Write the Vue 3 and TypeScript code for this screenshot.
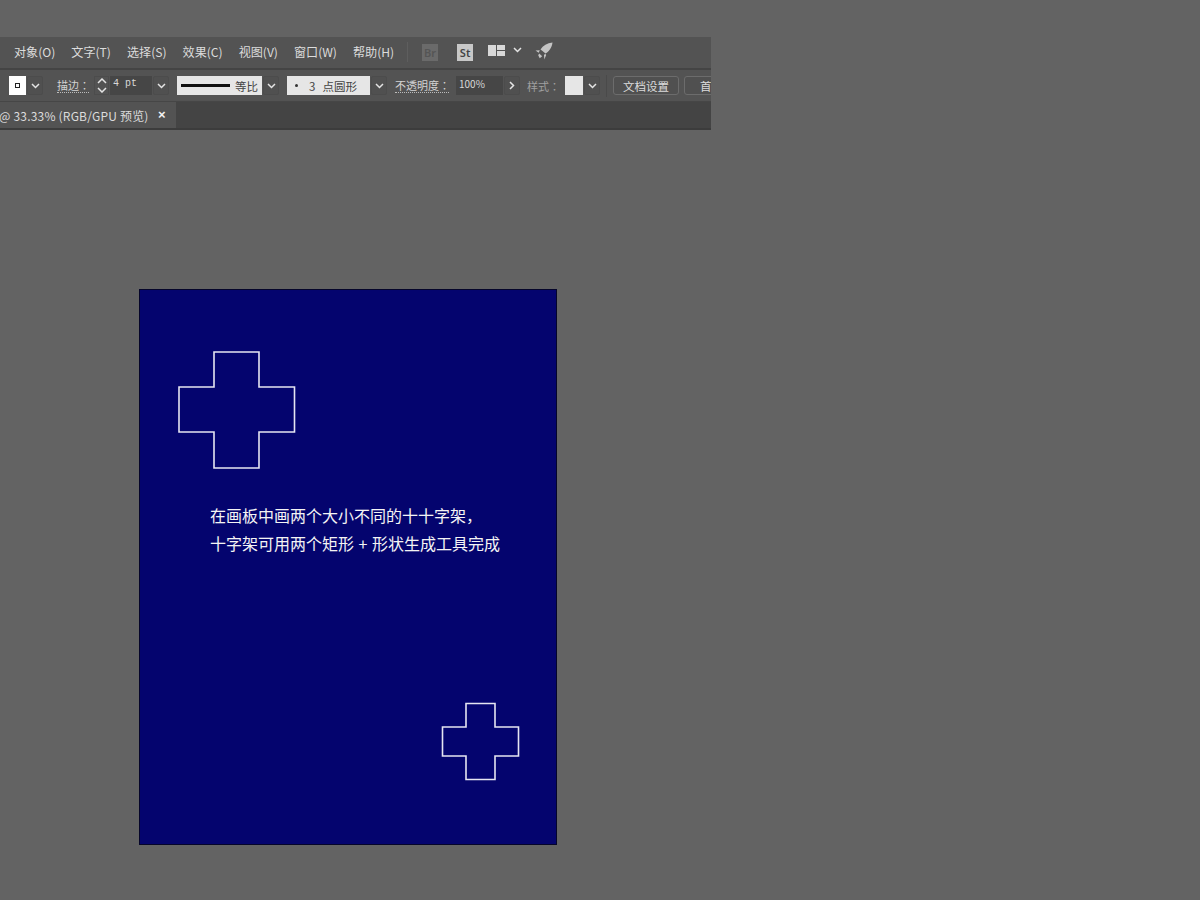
<script setup lang="ts">
const menus = ['对象(O)', '文字(T)', '选择(S)', '效果(C)', '视图(V)', '窗口(W)', '帮助(H)']
</script>

<template>
  <div class="page">
    <div class="toolbar">
      <div class="menu-row">
        <span v-for="m in menus" :key="m" class="menu-item">{{ m }}</span>
        <span class="vsep menu-sep"></span>
        <span class="badge br">Br</span>
        <span class="badge st">St</span>
        <svg class="layout-ico" width="17" height="11" viewBox="0 0 17 11">
          <path d="M0 0h8v11H0zM9 0h8v5H9zM9 6h8v5H9z" fill="#d8d8d8" />
        </svg>
        <svg class="chev menu-chev" width="9" height="6" viewBox="0 0 9 6">
          <path d="M1 1l3.5 3.500L8 1" />
        </svg>
        <svg class="rocket" width="18" height="18" viewBox="0 0 18 18">
          <path d="M17.500 .5C12 1 8 3.500 5.500 7.500l2 1.500 3 2.500C14 9.500 16.800 6 17.500 .5z" fill="#c4c4c4" />
          <path d="M4.800 8.200L.5 8.500l3.200 2.200zM9 13l.3 4.500 1.900-4.500-1-1.200zM4.200 11.500l3 2.800-2.500 2-1.500-3z" fill="#c4c4c4" />
        </svg>
      </div>

      <div class="control-row">
        <span class="swatch fill-box"><i class="dot-box"></i></span>
        <button class="chev-btn first-chev"><svg class="chev" width="9" height="6" viewBox="0 0 9 6"><path d="M1 1l3.500 3.500L8 1" /></svg></button>
        <span class="label dotted stroke-label">描边<span class="colon">：</span></span>
        <span class="spinner">
          <svg class="chev" width="10" height="6" viewBox="0 0 10 6"><path d="M1 5l4-4 4 4" /></svg>
          <svg class="chev" width="10" height="6" viewBox="0 0 10 6"><path d="M1 1l4 4 4-4" /></svg>
        </span>
        <span class="input pt-input">4 pt</span>
        <button class="chev-btn"><svg class="chev" width="9" height="6" viewBox="0 0 9 6"><path d="M1 1l3.500 3.500L8 1" /></svg></button>
        <span class="select stroke-select"><i class="line"></i><b>等比</b></span>
        <button class="chev-btn"><svg class="chev" width="9" height="6" viewBox="0 0 9 6"><path d="M1 1l3.500 3.500L8 1" /></svg></button>
        <span class="select brush-select"><i class="round"></i><b class="three">3</b><b>点圆形</b></span>
        <button class="chev-btn"><svg class="chev" width="9" height="6" viewBox="0 0 9 6"><path d="M1 1l3.500 3.500L8 1" /></svg></button>
        <span class="label dotted opacity-label">不透明度<span class="colon">：</span></span>
        <span class="input opacity-input">100%</span>
        <button class="chev-btn"><svg class="chev" width="6" height="9" viewBox="0 0 6 9"><path d="M1 1l3.500 3.500L1 8" /></svg></button>
        <span class="label style-label">样式<span class="colon">：</span></span>
        <span class="swatch style-box"></span>
        <button class="chev-btn"><svg class="chev" width="9" height="6" viewBox="0 0 9 6"><path d="M1 1l3.500 3.500L8 1" /></svg></button>
        <span class="vsep ctrl-sep"></span>
        <button class="btn doc-btn">文档设置</button>
        <button class="btn pref-btn">首</button>
      </div>

      <div class="tab-row">
        <div class="tab">
          <span class="tab-title">@ 33.33% (RGB/GPU 预览)</span>
          <span class="tab-close">×</span>
        </div>
      </div>
    </div>

    <div class="artboard">
      <svg class="cross big" width="118" height="118" viewBox="0 0 118 118">
        <path d="M36 1h45v35h35.500v45H81v36H36V81H1V36h35z" />
      </svg>
      <p class="note">在画板中画两个大小不同的十十字架，<br />十字架可用两个矩形 + 形状生成工具完成</p>
      <svg class="cross small" width="79" height="79" viewBox="0 0 79 79">
        <path d="M25 1.500h29V25h23.500v29H54v23.500H25V54H1.500V25H25z" />
      </svg>
    </div>
  </div>
</template>

<style>
html, body { margin: 0; background: #636363; }
</style>

<style scoped>
.page {
  width: 1200px;
  height: 900px;
  overflow: hidden;
  background: #636363;
  padding-top: 37px;
  box-sizing: border-box;
  font-family: "Noto Sans CJK SC", "Liberation Sans", sans-serif;
}
.toolbar {
  width: 711px;
  height: 93px;
  background: #535353;
  overflow: hidden;
  display: flex;
  flex-direction: column;
}
.menu-row {
  flex: none;
  display: flex;
  align-items: center;
  gap: 16px;
  padding-left: 14px;
  padding-bottom: 2px;
  border-bottom: 2px solid #444;
  box-sizing: border-box;
  height: 33px;
}
.menu-item {
  font-size: 12.1px;
  line-height: 16px;
  color: #dcdcdc;
  white-space: nowrap;
  flex: none;
}
.vsep {
  width: 1px;
  background: #5e5e5e;
  flex: none;
}
.menu-sep { height: 20px; margin-left: -3px; margin-right: -2px; }
.badge {
  width: 16px;
  height: 17px;
  font-family: "Noto Sans", sans-serif;
  font-size: 11px;
  font-weight: 600;
  line-height: 17px;
  text-align: center;
  flex: none;
  margin-top: 1px;
}
.br { background: #6a6a6a; color: #555; margin-right: 3px; }
.st { background: #c8c8c8; color: #444; margin-right: -1px; }
.layout-ico { flex: none; margin-top: -3px; }
.menu-chev { margin-left: -8px; margin-right: -3px; margin-top: -3px; }
.rocket { flex: none; margin-top: -2px; }
.chev {
  fill: none;
  stroke: #e4e4e4;
  stroke-width: 1.5;
  flex: none;
}
.control-row {
  height: 31px;
  flex: none;
  display: flex;
  align-items: center;
  padding-left: 9px;
  font-size: 11px;
  color: #d2d2d2;
}
.swatch {
  width: 17px;
  height: 19px;
  background: #e6e6e6;
  flex: none;
}
.fill-box {
  background: #fff;
  display: flex;
  align-items: center;
  justify-content: center;
}
.dot-box {
  width: 3px;
  height: 3px;
  border: 1px solid #222;
}
.chev-btn {
  width: 16px;
  height: 19px;
  padding: 0;
  margin: 0 0 0 1px;
  border: 1px solid #4c4c4c;
  border-radius: 2px;
  background: #505050;
  display: flex;
  align-items: center;
  justify-content: center;
  flex: none;
  box-sizing: border-box;
}
.label { flex: none; white-space: nowrap; line-height: 14px; }
.colon { font-family: "Noto Sans CJK TC", sans-serif; }
.dotted { border-bottom: 1px dotted #bbb; }
.stroke-label { width: 32px; margin-left: 14px; }
.spinner {
  width: 15px;
  height: 19px;
  margin-left: 5px;
  display: flex;
  flex-direction: column;
  align-items: center;
  justify-content: center;
  gap: 3px;
  border: 1px solid #4c4c4c;
  box-sizing: border-box;
  flex: none;
}
.input {
  height: 19px;
  line-height: 15px;
  background: #464646;
  color: #d8d8d8;
  box-sizing: border-box;
  padding-left: 3px;
  flex: none;
  font-size: 10px;
}
.pt-input { width: 42px; margin-left: 1px; font-family: "Liberation Mono", monospace; }
.select {
  height: 19px;
  background: #e6e6e6;
  color: #444;
  display: flex;
  align-items: center;
  flex: none;
  box-sizing: border-box;
}
.select b { font-weight: 400; font-size: 11.5px; }
.stroke-select { width: 85px; margin-left: 8px; padding-left: 4px; }
.line {
  width: 49px;
  height: 3px;
  background: #111;
  margin-right: 5px;
  flex: none;
}
.brush-select { width: 83px; margin-left: 8px; padding-left: 8px; }
.round {
  width: 3px;
  height: 3px;
  border-radius: 50%;
  background: #333;
  margin-right: 11px;
}
.three { margin-right: 7px; }
.opacity-label { width: 54px; margin-left: 8px; }
.opacity-input { width: 47px; margin-left: 7px; }
.style-label { width: 30px; margin-left: 7px; color: #a0a0a0; }
.style-box { width: 18px; margin-left: 8px; }
.ctrl-sep { height: 22px; margin-left: 6px; margin-right: 6px; background: #4a4a4a; }
.btn {
  height: 19px;
  padding: 0;
  background: #505050;
  border: 1px solid #6c6c6c;
  border-radius: 3px;
  color: #dcdcdc;
  font-family: inherit;
  font-size: 11.5px;
  flex: none;
  white-space: nowrap;
  overflow: hidden;
  box-sizing: border-box;
}
.doc-btn { width: 66px; }
.pref-btn { width: 66px; margin-left: 5px; text-align: left; padding-left: 15px; }
.tab-row {
  flex: 1;
  background: #444;
  border-top: 1px solid #464646;
  border-bottom: 2px solid #3c3c3c;
  display: flex;
}
.tab {
  width: 176px;
  background: #535353;
  display: flex;
  align-items: center;
  flex: none;
  white-space: nowrap;
  color: #dcdcdc;
  font-size: 12px;
}
.tab-title { width: 158px; margin-left: -1px; flex: none; letter-spacing: 0.2px; }
.tab-close { font-family: "Liberation Sans", sans-serif; font-weight: 700; font-size: 13px; line-height: 14px; color: #f2f2f2; margin-left: 1px; }
.artboard {
  position: relative;
  width: 418px;
  height: 556px;
  margin: 159px 0 0 139px;
  box-sizing: border-box;
  background: #04046e;
  border: 1px solid #05052a;
  padding: 211px 0 0 70px;
}
.note {
  margin: 0;
  color: #f4f4f4;
  font-size: 16px;
  line-height: 28px;
  white-space: nowrap;
  word-spacing: 1px;
}
.cross { position: absolute; }
.cross path { fill: none; stroke: #e6e6f2; stroke-width: 1.6; }
.big { left: 38px; top: 61px; }
.small { left: 301px; top: 412px; }
</style>
